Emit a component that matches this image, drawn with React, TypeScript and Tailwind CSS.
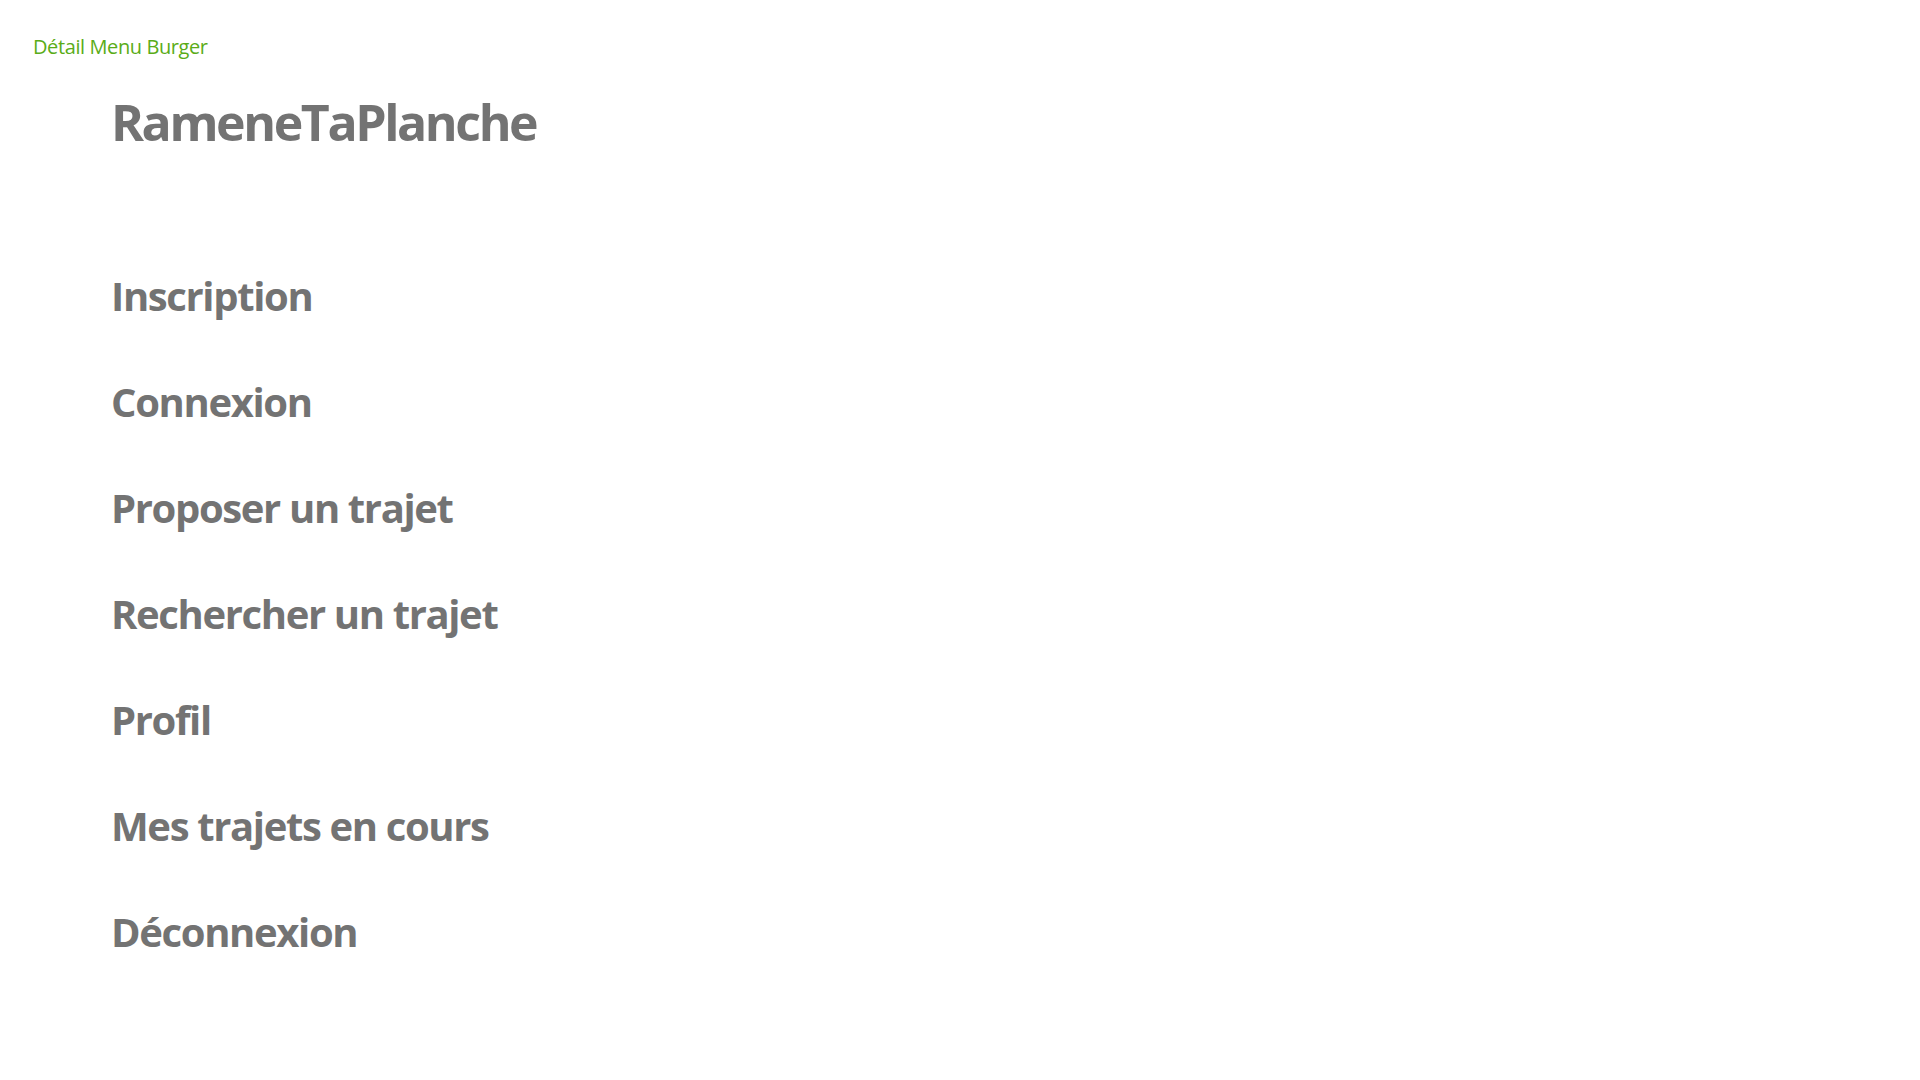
import React from "react";

const items = [
  "Inscription",
  "Connexion",
  "Proposer un trajet",
  "Rechercher un trajet",
  "Profil",
  "Mes trajets en cours",
  "Déconnexion",
];

export default function App() {
  return (
    <div className="min-h-screen w-full bg-white font-['Open_Sans',sans-serif]">
      <div className="px-[33px] pt-[33px]">
        <p className="text-[20px] leading-[28px] tracking-[-0.02em] text-[#5aac18]">Détail Menu Burger</p>
      </div>

      <div className="pl-[111px]">
        <h1 className="mt-[36px] text-[50px] leading-[50px] font-bold tracking-[-0.048em] text-[#737373]">
          RameneTaPlanche
        </h1>

        {/* menu entries */}
        <nav className="mt-[96px] flex flex-col">
          {items.map((label) => (
            <a
              key={label}
              className="h-[106px] text-[40px] leading-[106px] font-bold tracking-[-0.034em] text-[#737373]"
            >
              {label}
            </a>
          ))}
        </nav>
      </div>
    </div>
  );
}
